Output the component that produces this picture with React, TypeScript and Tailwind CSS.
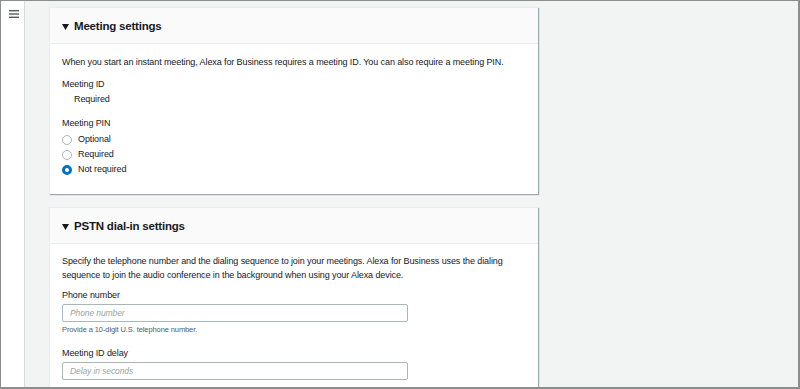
import React from "react";

const font = { fontFamily: '"Liberation Sans", Arial, sans-serif' };

function Radio({label, checked}: {label: string, checked?: boolean}) {
  return (
      <label className="flex items-center h-[15px] gap-[6px] text-[9px] tracking-[-0.1px] text-[#16191f]">
        {checked ? (
            <span className="w-[10px] h-[10px] rounded-full border-[3px] border-[#0073bb] bg-white" />
        ) : (
            <span className="w-[10px] h-[10px] rounded-full border border-[#aab7b8] bg-white" />
        )}
        {label}
      </label>
  );
}

function CardHeader({title}: {title: string}) {
  return (
      <div className="h-[36px] flex items-center px-[12px] pt-[2px] gap-[5px] bg-[#fafafa] border-b border-[#eaeded]">
        <svg width="7" height="6" viewBox="0 0 7 6" className="mt-[1px]">
          <path d="M0 0 L7 0 L3.5 6 Z" fill="#16191f" />
        </svg>
        <span className="text-[11.5px] tracking-[-0.2px] font-bold text-[#16191f]">{title}</span>
      </div>
  );
}

function Field({label, placeholder, hint}: {label: string, placeholder: string, hint?: string}) {
  return (
      <div>
        <div className="text-[9px] leading-[14px] text-[#16191f]">{label}</div>
        <div className="mt-[2px] w-[346px] h-[18px] border border-[#aab7b8] rounded-[2px] flex items-center px-[7px]">
          <span className="text-[8.5px] italic text-[#9aa5a6]">{placeholder}</span>
        </div>
        {hint && <div className="mt-[2px] text-[7.5px] leading-[12px] text-[#545b64]">{hint}</div>}
      </div>
  );
}

export default function App() {
  return (
      <div style={font} className="w-[800px] h-[389px] overflow-hidden flex border-[#8d8d8d] border-t border-l border-r-2 border-b-2 bg-[#f2f3f3]">
        <div className="w-[24px] shrink-0 bg-white border-r border-[#d5dbdb] flex justify-center pt-[9px]">
          <svg width="10" height="8" viewBox="0 0 10 8" className="ml-[2px]">
            <rect x="0" y="0" width="10" height="1.4" fill="#545b64" />
            <rect x="0" y="3.3" width="10" height="1.4" fill="#545b64" />
            <rect x="0" y="6.6" width="10" height="1.4" fill="#545b64" />
          </svg>
        </div>
        <div className="flex-1 pl-[24px] pt-[6px] flex flex-col gap-[13px]">
          <div className="w-[489px] bg-white border-t border-l border-[#eaeded] shadow-[1px_1px_1px_0_rgba(0,28,36,0.35)] shrink-0">
            <CardHeader title="Meeting settings" />
            <div className="px-[12px] pt-[11px] pb-[17px] text-[#16191f] text-[9px] tracking-[-0.1px]">
              <p className="leading-[14px]">
                When you start an instant meeting, Alexa for Business requires a meeting ID. You can also require a meeting PIN.
              </p>
              <div className="mt-[8px] leading-[14px]">Meeting ID</div>
              <div className="mt-[1px] pl-[12px] leading-[15px]">Required</div>
              <div className="mt-[9px] leading-[14px]">Meeting PIN</div>
              <div className="mt-[2px] flex flex-col">
                <Radio label="Optional" />
                <Radio label="Required" />
                <Radio label="Not required" checked />
              </div>
            </div>
          </div>
          <div className="w-[489px] bg-white border-t border-l border-[#eaeded] shadow-[1px_1px_1px_0_rgba(0,28,36,0.35)] shrink-0">
            <CardHeader title="PSTN dial-in settings" />
            <div className="px-[12px] pt-[10px] pb-[16px] text-[#16191f] tracking-[-0.1px]">
              <p className="text-[9px] leading-[14px] w-[448px]">
                Specify the telephone number and the dialing sequence to join your meetings. Alexa for Business uses the dialing sequence to join the audio conference in the background when using your Alexa device.
              </p>
              <div className="mt-[6px]">
                <Field label="Phone number" placeholder="Phone number" hint="Provide a 10-digit U.S. telephone number." />
              </div>
              <div className="mt-[10px]">
                <Field label="Meeting ID delay" placeholder="Delay in seconds" />
              </div>
            </div>
          </div>
        </div>
      </div>
  );
}
